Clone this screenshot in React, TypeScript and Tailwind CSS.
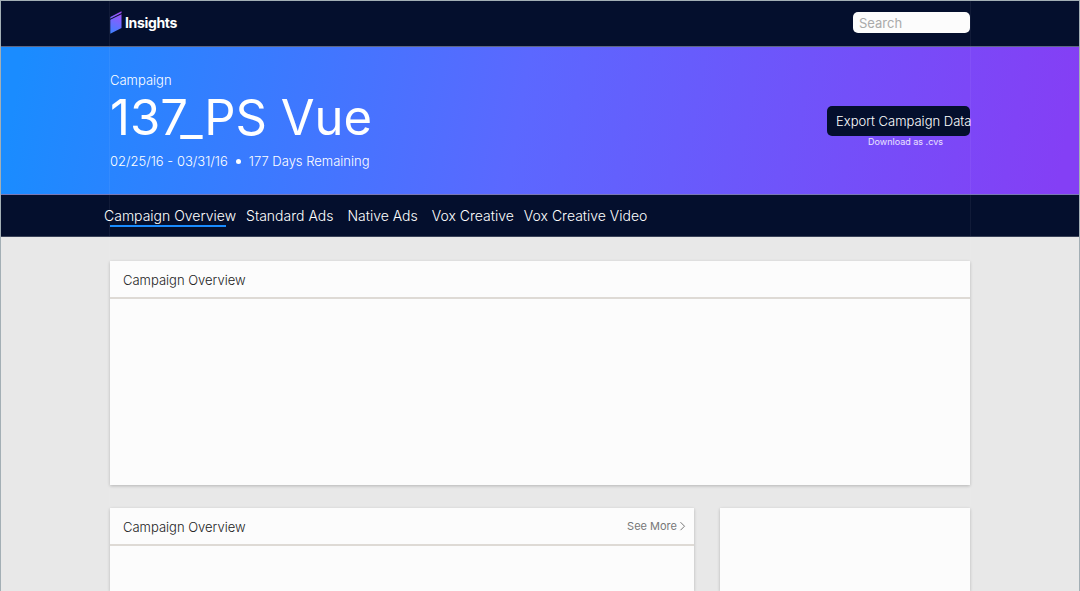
import type { ReactNode } from "react";

const tabs = [
  { label: "Campaign Overview", place: "-ml-1.5 mr-2.5", active: true },
  { label: "Standard Ads", place: "mr-3.5" },
  { label: "Native Ads", place: "mr-3.5" },
  { label: "Vox Creative", place: "mr-2.5" },
  { label: "Vox Creative Video", place: "" },
];

function Container({ className = "", children }: { className?: string; children: ReactNode }) {
  return <div className={`mx-auto w-full max-w-[862px] border-x border-white/5 ${className}`}>{children}</div>;
}

function Logo() {
  return (
    <a href="#" className="flex items-center gap-[3px] text-[14px] leading-6 font-bold tracking-tight text-white">
      <svg width="12" height="24" viewBox="0 0 12 24" aria-hidden="true">
        <defs>
          <linearGradient id="mark" gradientUnits="userSpaceOnUse" x1="1" y1="23" x2="11" y2="1">
            <stop offset="0" stopColor="#3b82ff" />
            <stop offset="0.5" stopColor="#6f6aff" />
            <stop offset="1" stopColor="#a44df5" />
          </linearGradient>
        </defs>
        <path d="M0.3 6 11.5 0.2V2L0.3 7.8Z" fill="url(#mark)" />
        <path d="M0.3 8.8 11.5 3.2V17L0.3 22.8Z" fill="url(#mark)" />
      </svg>
      Insights
    </a>
  );
}

function Panel({ title, action, className = "" }: { title: string; action?: ReactNode; className?: string }) {
  return (
    <section className={`bg-[#fcfcfc] shadow-[0_1px_3px_rgba(0,0,0,0.22)] ${className}`}>
      <header className="flex h-[38px] items-center justify-between border-b-2 border-[#dedad5] pr-2 pl-[13px]">
        <h2 className="pt-0.5 text-[13px] leading-5 font-[350] text-[#222]">{title}</h2>
        {action}
      </header>
    </section>
  );
}

export default function App() {
  return (
    <div className="flex min-h-screen flex-col border-x border-t border-[#a3afb5] bg-[#e8e8e8] font-['Inter','Liberation_Sans',sans-serif]">
      <header className="border-b border-[#5d6684] bg-[#040f2d]">
        <Container className="flex h-[45px] items-center justify-between pb-0.5">
          <Logo />
          <input
            type="search"
            aria-label="Search"
            placeholder="Search"
            className="h-[21px] w-[117px] rounded-[5px] bg-[#fcfcfc] px-1.5 text-[13px] leading-5 text-[#333] outline-none placeholder:text-[#aaa]"
          />
        </Container>
      </header>

      <div className="border-b border-[#7a78b5] bg-linear-[100deg,#1a8cff_2%,#5b68ff_48%,#843ff5_98%]">
        <Container className="flex h-[147px] items-center justify-between">
          <div className="pt-0.5 text-white">
            <p className="text-[13px] leading-4 font-[350]">Campaign</p>
            <h1 className="text-[49px] leading-[60px] font-normal">137_PS Vue</h1>
            <p className="mt-[3px] flex items-center gap-2 text-[13px] leading-5 font-[350]">
              <span>02/25/16 - 03/31/16</span>
              <span className="size-[5px] rounded-full bg-white" />
              <span>177 Days Remaining</span>
            </p>
          </div>
          <div className="flex w-[143px] flex-col items-center pt-3">
            <button
              type="button"
              className="h-[30px] w-full rounded-[5px] bg-[#040f2d] pl-[9px] text-left text-[13px] leading-5 font-light whitespace-nowrap text-white"
            >
              Export Campaign Data
            </button>
            <p className="pl-3.5 text-[9px] leading-3 text-white/85">Download as .cvs</p>
          </div>
        </Container>
      </div>

      <nav aria-label="Campaign sections" className="border-b border-[#3a4258] bg-[#040f2d]">
        <Container className="flex h-[41px] items-center">
          {tabs.map((tab) => (
            <a
              key={tab.label}
              href="#"
              aria-current={tab.active ? "page" : undefined}
              className={`relative text-[14px] leading-5 font-light whitespace-nowrap text-white ${tab.place}`}
            >
              {tab.label}
              {tab.active && <span className="absolute right-2.5 -bottom-px left-1.5 h-0.5 bg-[#1a8cff]" />}
            </a>
          ))}
        </Container>
      </nav>

      <main className="flex flex-1 flex-col">
        <Container className="flex flex-1 flex-col pt-6">
          <Panel title="Campaign Overview" className="h-[224px]" />
          <div className="mt-[23px] flex flex-1 gap-[26px]">
            <Panel
              title="Campaign Overview"
              className="flex-1"
              action={
                <a href="#" className="flex items-center gap-0.5 text-[11px] leading-4 text-[#777]">
                  See More
                  <svg width="7" height="10" viewBox="0 0 7 10" fill="none" stroke="currentColor" aria-hidden="true">
                    <path d="M1.5 1.2 5.5 5.2 1.5 9.2" />
                  </svg>
                </a>
              }
            />
            <aside aria-label="Details" className="w-[250px] bg-[#fcfcfc] shadow-[0_1px_3px_rgba(0,0,0,0.22)]" />
          </div>
        </Container>
      </main>
    </div>
  );
}
